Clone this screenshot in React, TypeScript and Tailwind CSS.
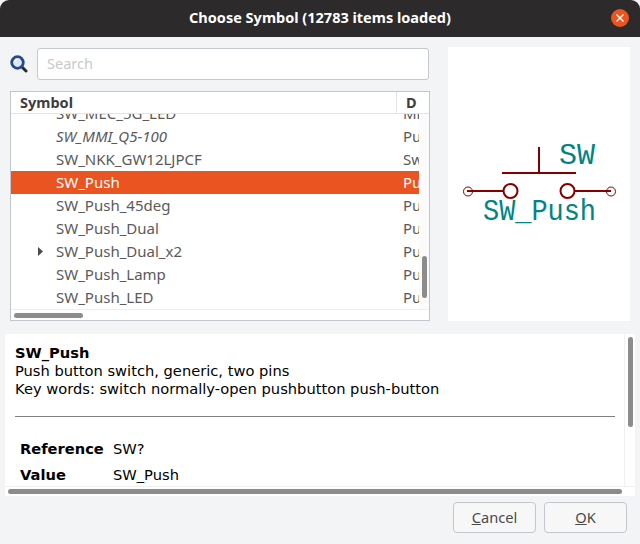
const symbols = [
  { name: "SW_MEC_5G_LED", desc: "Mi" },
  { name: "SW_MMI_Q5-100", desc: "Pu", italic: true },
  { name: "SW_NKK_GW12LJPCF", desc: "Sw" },
  { name: "SW_Push", desc: "Pu", selected: true },
  { name: "SW_Push_45deg", desc: "Pu" },
  { name: "SW_Push_Dual", desc: "Pu" },
  { name: "SW_Push_Dual_x2", desc: "Pu", expandable: true },
  { name: "SW_Push_Lamp", desc: "Pu" },
  { name: "SW_Push_LED", desc: "Pu" },
]

function SearchIcon() {
  return (
    <svg width="18" height="18" viewBox="0 0 18 18" className="shrink-0">
      <line x1="12" y1="12" x2="16" y2="16" stroke="#2a2a2a" strokeWidth="3" strokeLinecap="round" />
      <circle cx="7.5" cy="7.5" r="5.8" fill="#dfe7f5" stroke="#27488f" strokeWidth="2.8" />
      <path d="M4.6 7 A3.2 3.2 0 0 1 7.4 4.4" fill="none" stroke="#ffffff" strokeWidth="1.2" />
    </svg>
  )
}

function SymbolPreview() {
  return (
    <svg viewBox="448 47 182 274" className="w-full h-full">
      <g stroke="#840000" fill="none">
        <line x1="502" y1="173" x2="576" y2="173" strokeWidth="2" />
        <line x1="539" y1="147" x2="539" y2="173" strokeWidth="2" />
        <circle cx="510.5" cy="191" r="7" strokeWidth="2" />
        <circle cx="567.5" cy="191" r="7" strokeWidth="2" />
        <line x1="467" y1="191" x2="503" y2="191" strokeWidth="2" />
        <line x1="575" y1="191" x2="611" y2="191" strokeWidth="2" />
        <circle cx="468" cy="191.5" r="4.5" strokeWidth="1" />
        <circle cx="611" cy="191.5" r="4.5" strokeWidth="1" />
      </g>
      <g fill="#008484" fontFamily="'Liberation Mono', monospace">
        <text x="559" y="164" fontSize="30" textLength="36" lengthAdjust="spacingAndGlyphs">SW</text>
        <text x="483" y="220" fontSize="30" textLength="113" lengthAdjust="spacingAndGlyphs">SW_Push</text>
      </g>
    </svg>
  )
}

export default function App() {
  return (
    <div className="w-[640px] h-[544px] flex flex-col overflow-hidden bg-[#f3f4f6] font-['Noto_Sans',sans-serif]">
      <div className="h-[37px] shrink-0 flex items-center bg-[#2c2a2a] rounded-t-[9px] relative">
        <div className="flex-1 text-center text-white font-bold text-[14.5px] pb-[1px]">Choose Symbol (12783 items loaded)</div>
        <div className="absolute left-[611px] top-[9px] w-[18px] h-[18px] rounded-full bg-[#e95420] flex items-center justify-center">
          <svg width="10" height="10" viewBox="0 0 10 10">
            <path d="M1.5 1.5 L8.5 8.5 M8.5 1.5 L1.5 8.5" stroke="#ffffff" strokeWidth="1.4" />
          </svg>
        </div>
      </div>

      <div className="flex pl-[10px] pt-[10px]">
        <div className="w-[420px] flex flex-col">
          <div className="flex items-center h-[32px] mt-[1px]">
            <SearchIcon />
            <input
              placeholder="Search"
              className="ml-[9px] w-[392px] h-[32px] bg-white border border-[#c4c8cf] rounded-[3px] px-[9px] pb-[3px] text-[14.5px] text-[#3d3d3d] placeholder:text-[#c9c9c9] outline-none"
            />
          </div>

          <div className="mt-[11px] h-[230px] border border-[#c2c6ce] bg-white flex flex-col overflow-hidden">
            <div className="h-[22px] shrink-0 flex border-b border-[#e3e4e7] text-[14.5px] font-bold text-[#3d3d3d]">
              <div className="w-[386px] pl-[9px] border-r border-[#e3e4e7] leading-[21px]">Symbol</div>
              <div className="pl-[9px] w-[22px] overflow-hidden leading-[21px]">D</div>
            </div>
            <div className="flex h-[195px] shrink-0">
              <div className="w-[408px] h-[195px] overflow-hidden">
                <div className="-mt-[12px]">
                  {symbols.map(s => (
                    <div
                      key={s.name}
                      className={`h-[23px] flex items-center text-[15px] leading-[23px] ${s.selected ? "bg-[#e95420] text-white" : "text-[#5a5a5a]"}`}
                    >
                      <div className="w-[45px] shrink-0 flex justify-end pr-[13px]">
                        {s.expandable && (
                          <svg width="5" height="9" viewBox="0 0 5 9">
                            <path d="M0 0 L5 4.5 L0 9 Z" fill="#4a4a4a" />
                          </svg>
                        )}
                      </div>
                      <div className={`w-[347px] shrink-0 ${s.italic ? "italic" : ""}`}>{s.name}</div>
                      <div className="overflow-hidden">{s.desc}</div>
                    </div>
                  ))}
                </div>
              </div>
              <div className="w-[10px] pl-[3px] pt-[142px] bg-[#fbfbfb]">
                <div className="w-[5px] h-[42px] rounded-full bg-[#8c8c8c]" />
              </div>
            </div>
            <div className="h-[11px] shrink-0 flex border-t border-[#eeeeee] pl-[3px] pt-[3px] bg-white">
              <div className="w-[69px] h-[5px] rounded-full bg-[#8c8c8c]" />
            </div>
          </div>
        </div>

        <div className="ml-[18px] w-[182px] h-[274px] bg-white">
          <SymbolPreview />
        </div>
      </div>

      <div className="ml-[5px] mt-[13px] w-[630px] h-[162px] bg-white flex flex-col">
        <div className="flex h-[152px]">
          <div className="w-[620px] h-[152px] overflow-hidden border-r border-[#f0f0f0] pl-[10px] pt-[10px] font-['DejaVu_Sans',sans-serif] text-[14.67px] leading-[18px] text-black">
            <div className="font-bold">SW_Push</div>
            <div>Push button switch, generic, two pins</div>
            <div>Key words: switch normally-open pushbutton push-button</div>
            <hr className="mt-[18px] w-[600px] border-t border-[#808080]" />
            <div className="mt-[18px] flex pl-[5px] h-[27px] items-center">
              <div className="w-[93px] font-bold">Reference</div>
              <div>SW?</div>
            </div>
            <div className="flex pl-[5px] h-[26px] items-center">
              <div className="w-[93px] font-bold">Value</div>
              <div>SW_Push</div>
            </div>
          </div>
          <div className="pl-[3px] pt-[3px]">
            <div className="w-[5px] h-[90px] rounded-full bg-[#8c8c8c]" />
          </div>
        </div>
        <div className="h-[10px] border-t border-[#f0f0f0] pl-[3px] pt-[2px]">
          <div className="w-[614px] h-[5px] rounded-full bg-[#8c8c8c]" />
        </div>
      </div>

      <div className="flex justify-end gap-[8px] pr-[13px] pt-[6px]">
        <button className="w-[83px] h-[31px] pb-[1px] bg-[#f7f7f8] border border-[#c2c6ce] rounded-[4px] text-[14.67px] text-[#4a4a4a]">
          <span className="underline">C</span>ancel
        </button>
        <button className="w-[83px] h-[31px] pb-[1px] bg-[#f7f7f8] border border-[#c2c6ce] rounded-[4px] text-[14.67px] text-[#4a4a4a]">
          <span className="underline">O</span>K
        </button>
      </div>
    </div>
  )
}
